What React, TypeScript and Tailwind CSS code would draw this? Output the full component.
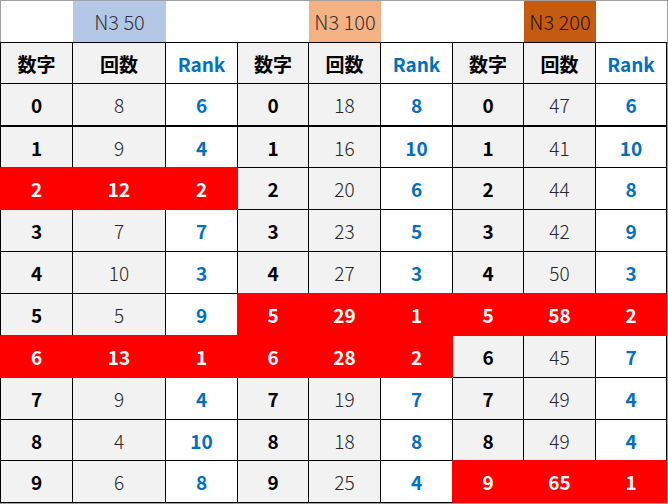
import React from "react";

type Row = [number, number, number, boolean];

type Group = {
  label: string;
  headBg: string;
  headText: string;
  rows: Row[];
};

const GROUPS: Group[] = [
  {
    label: "N3 50",
    headBg: "bg-[#b4c7e7]",
    headText: "text-[#333333]",
    rows: [
      [0, 8, 6, false],
      [1, 9, 4, false],
      [2, 12, 2, true],
      [3, 7, 7, false],
      [4, 10, 3, false],
      [5, 5, 9, false],
      [6, 13, 1, true],
      [7, 9, 4, false],
      [8, 4, 10, false],
      [9, 6, 8, false],
    ],
  },
  {
    label: "N3 100",
    headBg: "bg-[#f4b183]",
    headText: "text-[#333333]",
    rows: [
      [0, 18, 8, false],
      [1, 16, 10, false],
      [2, 20, 6, false],
      [3, 23, 5, false],
      [4, 27, 3, false],
      [5, 29, 1, true],
      [6, 28, 2, true],
      [7, 19, 7, false],
      [8, 18, 8, false],
      [9, 25, 4, false],
    ],
  },
  {
    label: "N3 200",
    headBg: "bg-[#c55a11]",
    headText: "text-[#2a1204]",
    rows: [
      [0, 47, 6, false],
      [1, 41, 10, false],
      [2, 44, 8, false],
      [3, 42, 9, false],
      [4, 50, 3, false],
      [5, 58, 2, true],
      [6, 45, 7, false],
      [7, 49, 4, false],
      [8, 49, 4, false],
      [9, 65, 1, true],
    ],
  },
];

// column widths incl. borders (first column also carries the left edge)
const COL_W = [
  "w-[73px]",
  "w-[93px]",
  "w-[72px]",
  "w-[71px]",
  "w-[72px]",
  "w-[72px]",
  "w-[71px]",
  "w-[72px]",
  "w-[71px]",
];

const ROW_H = [
  "h-[43px]",
  "h-[41px]",
  "h-[42px]",
  "h-[42px]",
  "h-[42px]",
  "h-[42px]",
  "h-[42px]",
  "h-[42px]",
  "h-[41px]",
  "h-[42px]",
];

const HEAD_NAMES = ["数字", "回数", "Rank"];

const isRed = (r: number, c: number) => {
  const g = GROUPS[Math.floor(c / 3)];
  if (!g) return false;
  const row = g.rows[r];
  return row ? row[3] : false;
};

const kindStyle = (kind: number) => {
  if (kind === 0) return "bg-[#f2f2f2] font-bold text-black";
  if (kind === 1) return "bg-[#f2f2f2] font-light text-[#262626]";
  return "bg-white font-bold text-[#0070c0]";
};

function DataCell({ r, c, value }: { r: number; c: number; value: number }) {
  const red = isRed(r, c);
  const right = red || (c < 8 && isRed(r, c + 1)) ? "border-r-[#ff0000]" : "border-r-black";
  const bottom =
    r === 0
      ? "border-b-2 border-b-black"
      : red || (r < 9 && isRed(r + 1, c))
        ? "border-b-[#ff0000]"
        : "border-b-black";
  const left = c === 0 ? (red ? "border-l border-l-[#ff0000]" : "border-l border-l-black") : "";
  const fill = red ? "bg-[#ff0000] font-bold text-white" : kindStyle(c % 3);

  return (
    <div
      className={`flex items-center justify-center border-r border-b ${COL_W[c]} ${right} ${bottom} ${left} ${fill}`}
    >
      {value}
    </div>
  );
}

export default function App() {
  return (
    <div className="w-[668px] h-[504px] overflow-hidden border-t border-r border-b border-[#a0a0a0] bg-white font-['Noto_Sans_CJK_JP','Noto_Sans',sans-serif] leading-none">
      {/* top labels */}
      <div className="flex h-[41px] border-l border-[#a0a0a0] text-[20px] font-light">
        {GROUPS.map((g, gi) => (
          <React.Fragment key={g.label}>
            <div className={gi === 0 ? "w-[72px]" : COL_W[gi * 3]} />
            <div className={`flex items-center justify-center ${COL_W[gi * 3 + 1]} ${g.headBg} ${g.headText}`}>
              {g.label}
            </div>
            <div className={COL_W[gi * 3 + 2]} />
          </React.Fragment>
        ))}
      </div>

      {/* column names */}
      <div className="flex h-[42px] text-[19px] font-bold">
        {COL_W.map((w, c) => (
          <div
            key={c}
            className={`flex items-center justify-center border-t border-r border-b border-black ${w} ${
              c === 0 ? "border-l" : ""
            } ${c % 3 === 2 ? "bg-white text-[#0070c0]" : "bg-[#f2f2f2] text-black"}`}
          >
            {HEAD_NAMES[c % 3]}
          </div>
        ))}
      </div>

      {/* data rows */}
      {GROUPS[0].rows.map((_, r) => (
        <div key={r} className={`flex text-[19px] ${ROW_H[r]}`}>
          {GROUPS.map((g, gi) =>
            g.rows[r].slice(0, 3).map((v, k) => (
              <DataCell key={`${gi}-${k}`} r={r} c={gi * 3 + k} value={v as number} />
            )),
          )}
        </div>
      ))}
    </div>
  );
}
